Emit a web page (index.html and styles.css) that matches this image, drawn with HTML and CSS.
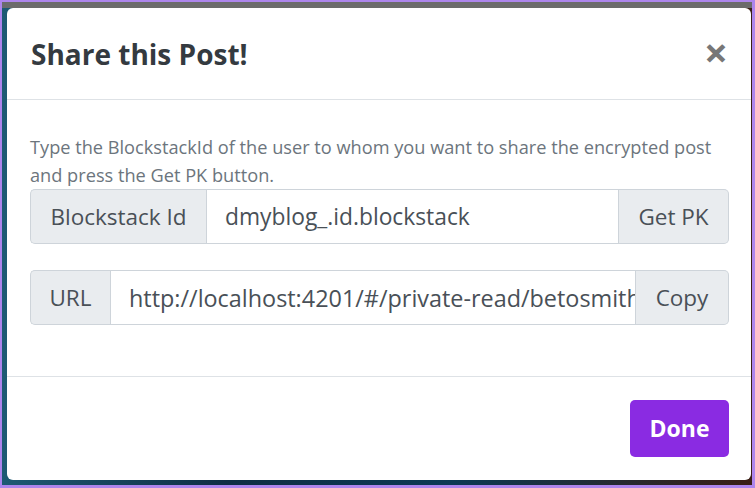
FILE: index.html
```html
<!DOCTYPE html>
<html>
<head>
<meta charset="utf-8">
<link rel="stylesheet" href="styles.css">
</head>
<body>
<div class="screen">
  <div class="modal">
    <div class="modal-header">
      <h1 class="modal-title">Share this Post!</h1>
      <button class="close" type="button" aria-label="Close">&times;</button>
    </div>
    <div class="modal-body">
      <p class="hint">Type the BlockstackId of the user to whom you want to share the encrypted post and press the Get PK button.</p>
      <div class="input-group first">
        <span class="addon prepend addon-id">Blockstack Id</span>
        <input class="field" type="text" value="dmyblog_.id.blockstack">
        <span class="addon append addon-pk">Get PK</span>
      </div>
      <div class="input-group">
        <span class="addon prepend addon-url">URL</span>
        <input class="field field-url" type="text" value="http://localhost:4201/#/private-read/betosmith.id.blockstack/1">
        <span class="addon append addon-copy">Copy</span>
      </div>
    </div>
    <div class="modal-footer">
      <button class="btn-done" type="button">Done</button>
    </div>
  </div>
</div>
</body>
</html>
```

FILE: styles.css
```css
html, body {
  margin: 0;
  padding: 0;
}
body {
  width: 755px;
  height: 488px;
  overflow: hidden;
  background: #a77fe8;
  font-family: "Open Sans", "Noto Sans", sans-serif;
}
.screen {
  box-sizing: border-box;
  width: 755px;
  height: 488px;
  border-style: solid;
  border-color: #ad85ec;
  border-width: 2px 3px 3px 2px;
  padding: 6px 1px 5px 5px;
  background:
    linear-gradient(180deg, #6b6b6b 0px, #6b6b6b 6px, transparent 6px),
    linear-gradient(90deg, #1d5a74 0%, #0e2e44 30%, #0b3a55 60%, #3a1e14 100%);
}
.modal {
  box-sizing: border-box;
  height: 100%;
  background: #fff;
  border-radius: 6px;
  display: flex;
  flex-direction: column;
}
.modal-header {
  height: 92px;
  box-sizing: border-box;
  border-bottom: 1px solid #dee2e6;
  display: flex;
  align-items: center;
  justify-content: space-between;
  padding: 0 23px 0 24px;
}
.modal-title {
  margin: 0;
  font-size: 28px;
  font-weight: 700;
  color: #343a40;
  letter-spacing: 0;
}
.close {
  border: 0;
  background: transparent;
  padding: 0;
  font-family: "Open Sans", sans-serif;
  font-size: 42px;
  font-weight: 700;
  line-height: 1;
  color: #777;
  margin-top: -4px;
}
.modal-body {
  flex: 1;
  padding: 33px 22px 0 23px;
}
.hint {
  margin: 0;
  font-size: 18.2px;
  line-height: 28px;
  color: #6c757d;
}
.input-group {
  display: flex;
  height: 55px;
  box-sizing: border-box;
}
.input-group.first {
  margin-top: 0;
  margin-bottom: 26px;
}
.addon {
  display: flex;
  align-items: center;
  justify-content: center;
  box-sizing: border-box;
  background: #e9ecef;
  border: 1px solid #ced4da;
  color: #495057;
  font-size: 22.5px;
  flex: none;
}
.prepend {
  border-radius: 5px 0 0 5px;
  border-right: 0;
}
.append {
  border-radius: 0 5px 5px 0;
  border-left: 0;
}
.addon-id { width: 176px; }
.addon-pk { width: 110px; }
.addon-url { width: 80px; }
.addon-copy { width: 93px; }
.field {
  flex: 1;
  min-width: 0;
  box-sizing: border-box;
  height: 55px;
  border: 1px solid #ced4da;
  margin: 0;
  padding: 0 18px;
  font-family: "Open Sans", "Noto Sans", sans-serif;
  font-size: 22.8px;
  color: #495057;
  background: #fff;
  outline: none;
}
.field-url {
  padding-right: 0;
  font-size: 23.4px;
}
.modal-footer {
  height: 104px;
  box-sizing: border-box;
  border-top: 1px solid #dee2e6;
  display: flex;
  align-items: center;
  justify-content: flex-end;
  padding: 0 22px 1px 0;
}
.btn-done {
  width: 99px;
  height: 57px;
  border: 0;
  border-radius: 5px;
  background: #8a2be2;
  color: #fff;
  font-family: "Open Sans", sans-serif;
  font-size: 23px;
  font-weight: 700;
}
```
